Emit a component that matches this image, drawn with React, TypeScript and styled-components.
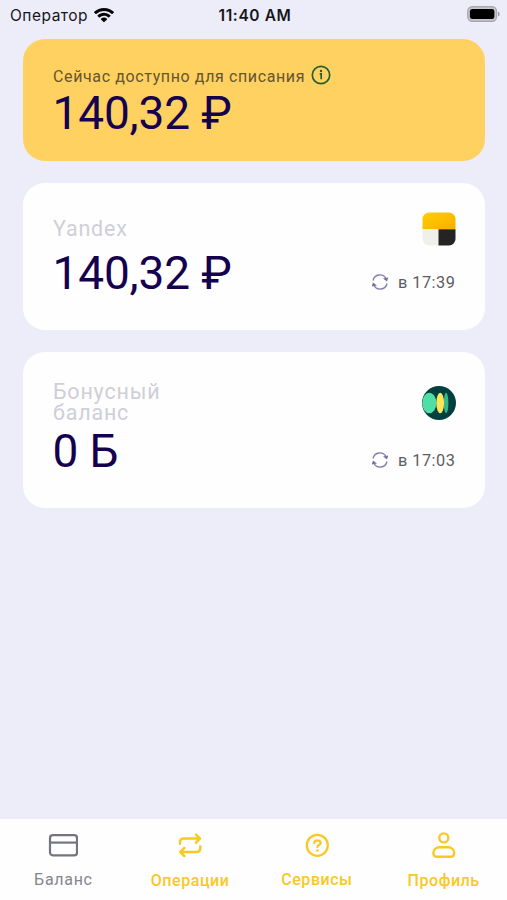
import React from "react";
import styled, { createGlobalStyle } from "styled-components";

const GlobalStyle = createGlobalStyle`
  *, *::before, *::after { box-sizing: border-box; }
  body { margin: 0; background: #ededf9; font-family: Roboto, sans-serif; }
  svg { display: block; flex: none; }
`;

const Screen = styled.div`
  display: flex;
  flex-direction: column;
  width: 507px;
  height: 900px;
  background: #ededf9;
  overflow: hidden;
`;

const StatusBar = styled.header`
  display: grid;
  grid-template-columns: 1fr auto 1fr;
  align-items: center;
  height: 30px;
  padding: 0 7px 0 10px;
  font-family: Inter, sans-serif;
  color: #15151c;
`;

const Carrier = styled.div`
  display: flex;
  align-items: center;
  gap: 6px;
  font-size: 15.5px;
  line-height: 20px;
  letter-spacing: 0.5px;

  span {
    padding-top: 1px;
  }
`;

const Clock = styled.div`
  padding-top: 1px;
  font-size: 15.5px;
  font-weight: 600;
  line-height: 20px;
  letter-spacing: 0.6px;
`;

const BatterySlot = styled.div`
  display: flex;
  justify-content: flex-end;
  margin-top: -2px;
`;

const Main = styled.main`
  flex: 1;
  display: flex;
  flex-direction: column;
  gap: 22px;
  padding: 9px 22px 0 23px;
`;

const Card = styled.section<{ $height: number; $top: number; $tone?: string }>`
  display: flex;
  justify-content: space-between;
  height: ${(p) => p.$height}px;
  padding: ${(p) => p.$top}px 30px 0;
  border-radius: 22px;
  background: ${(p) => p.$tone ?? "#fefeff"};
`;

const CardBody = styled.div`
  display: flex;
  flex-direction: column;
`;

const Hint = styled.div`
  display: flex;
  align-items: center;
  gap: 5.5px;
  height: 20px;
  font-size: 16px;
  letter-spacing: 0.62px;
  white-space: nowrap;
  color: #66552f;

  span {
    padding-top: 2px;
  }
`;

const Label = styled.div`
  width: 130px;
  font-size: 21.5px;
  line-height: 21.5px;
  letter-spacing: 0.8px;
  color: #cfcfd7;
`;

const Amount = styled.div<{ $gap: number }>`
  margin-top: ${(p) => p.$gap}px;
  margin-left: -0.5px;
  font-size: 46px;
  line-height: 54px;
  letter-spacing: -0.15px;
  white-space: nowrap;
  color: #150050;
`;

const CardSide = styled.div`
  display: flex;
  flex-direction: column;
  align-items: flex-end;
`;

const Updated = styled.div<{ $gap: number }>`
  display: flex;
  align-items: center;
  gap: 9px;
  margin-top: ${(p) => p.$gap}px;
  margin-right: -0.3px;
  font-size: 16.3px;
  line-height: 20px;
  letter-spacing: 0.5px;
  white-space: nowrap;
  color: #5c5c60;

  svg {
    margin-top: -1px;
  }

  span {
    padding-top: 1px;
  }
`;

const TabBar = styled.nav`
  display: grid;
  grid-template-columns: repeat(4, 1fr);
  height: 81px;
  padding: 11px 0 0;
  background: #fefeff;
`;

const Tab = styled.a<{ $muted?: boolean; $drop: number }>`
  display: flex;
  flex-direction: column;
  align-items: center;
  gap: ${(p) => 10 + p.$drop}px;
  font-size: 16px;
  font-weight: ${(p) => (p.$muted ? 400 : 500)};
  line-height: 20px;
  letter-spacing: ${(p) => (p.$muted ? 0.7 : 0.55)}px;
  color: ${(p) => (p.$muted ? "#85858b" : "#fac823")};
`;

const WifiIcon = () => (
  <svg width="20" height="15" viewBox="0 0 20 15" fill="#050507">
    <path d="M10 0C6.2 0 2.8 1.4.2 3.8c-.2.2-.2.5 0 .7l1.400 1.400c.2.2.5.2.7 0A11.200 11.200 0 0 1 10 3c3 0 5.700 1.100 7.700 2.900.2.2.5.2.7 0l1.400-1.400c.2-.2.2-.5 0-.7A14.300 14.300 0 0 0 10 0Z" />
    <path d="M10 4.800c-2.500 0-4.700.9-6.400 2.500-.2.2-.2.5 0 .7L5 9.400c.2.2.5.2.7 0A6.300 6.300 0 0 1 10 7.800c1.700 0 3.200.6 4.300 1.600.2.2.5.2.7 0L16.400 8c.2-.2.2-.5 0-.7A9.300 9.300 0 0 0 10 4.800Z" />
    <path d="M10 9.600c-1.200 0-2.200.4-3 1.100-.2.2-.2.5 0 .7l2.600 2.700c.2.2.5.2.7 0l2.700-2.700c.2-.2.2-.5 0-.7-.8-.7-1.800-1.100-3-1.100Z" />
  </svg>
);

const BatteryIcon = () => (
  <svg width="33" height="16" viewBox="0 0 33 16">
    <rect x=".75" y=".75" width="28.800" height="14.500" rx="4.500" fill="#c9c8d1" stroke="#a9a8b0" strokeWidth="1.300" />
    <rect x="2.900" y="2.900" width="24.500" height="10.200" rx="2.400" fill="#000" />
    <path d="M31 5.600c1 .4 1.600 1.300 1.600 2.400S32 10 31 10.400Z" fill="#9b9aa2" />
  </svg>
);

const InfoIcon = () => (
  <svg width="20" height="20" viewBox="0 0 20 20" fill="none" stroke="#255f34">
    <circle cx="10" cy="10" r="8.700" strokeWidth="1.700" />
    <path d="M8.700 8.900H10.200V14.200" strokeWidth="1.700" />
    <circle cx="10" cy="6" r="1.200" fill="#255f34" stroke="none" />
  </svg>
);

const RefreshIcon = () => (
  <svg width="18" height="18" viewBox="0 0 18 18" fill="none" stroke="#8280ad" strokeWidth="1.400">
    <path d="M2 7.500A7 7 0 0 1 15.300 6.200M16 10.500A7 7 0 0 1 2.700 11.800" />
    <path d="M12 5.600 17.300 4.400 16 8.400ZM6 12.400.7 13.600 2 9.600Z" fill="#7472a3" stroke="none" />
  </svg>
);

const YandexLogo = () => (
  <svg width="34" height="34" viewBox="0 0 34 34">
    <defs>
      <clipPath id="tile"><rect x=".5" y=".5" width="33" height="33" rx="6.500" /></clipPath>
      <linearGradient id="sun" x1="0" y1="0" x2="1" y2="1">
        <stop stopColor="#ffd000" />
        <stop offset="1" stopColor="#f8ae00" />
      </linearGradient>
    </defs>
    <g clipPath="url(#tile)">
      <path d="M0 0h34v17.300H0Z" fill="url(#sun)" />
      <path d="M0 17.300h17V34H0Z" fill="#f0efe9" />
      <path d="M16.500 17.300h17.500V34H16.500Z" fill="#242424" />
    </g>
  </svg>
);

const BonusLogo = () => (
  <svg width="34" height="34" viewBox="0 0 34 34">
    <circle cx="17" cy="17" r="17" fill="#023f3f" />
    <ellipse cx="7.300" cy="17" rx="7.100" ry="10.300" fill="#50dea7" />
    <ellipse cx="24.100" cy="17" rx="2.300" ry="10.200" fill="#35b98b" />
    <ellipse cx="18.200" cy="17" rx="3.900" ry="10.300" fill="#fbe558" />
  </svg>
);

const CardIcon = () => (
  <svg width="30" height="30" viewBox="0 0 30 30" fill="none" stroke="#737480" strokeWidth="2.200">
    <rect x="2" y="5.200" width="27" height="20.200" rx="2.800" />
    <path d="M2 12.600h27" />
  </svg>
);

const RepeatIcon = () => (
  <svg width="30" height="30" viewBox="0 0 30 30" fill="none" stroke="#fac823" strokeWidth="2.500" strokeLinecap="round" strokeLinejoin="round">
    <path d="M5 13.800v-1.500c0-2.400 1.500-3.700 3.900-3.700H25M21 4.600 25 8.600l-4 4" />
    <path d="M25.300 16.600v1.700c0 2.400-1.500 3.700-3.900 3.700H5.300M9.300 18 5.300 22l4 4" />
  </svg>
);

const HelpIcon = () => (
  <svg width="30" height="30" viewBox="0 0 30 30" fill="none" stroke="#fac823" strokeWidth="2.300" strokeLinecap="round">
    <circle cx="15.300" cy="15.300" r="10.500" />
    <path d="M12.300 13.100c0-3.700 6.300-3.600 6.300-.2 0 2.200-3.200 2.100-3.200 4.200" />
    <circle cx="15.400" cy="20.500" r="1.350" fill="#fac823" stroke="none" />
  </svg>
);

const ProfileIcon = () => (
  <svg width="30" height="30" viewBox="0 0 30 30" fill="none" stroke="#fac823" strokeWidth="2.400">
    <circle cx="14.800" cy="7.900" r="4.500" />
    <path d="M10.400 17.300h8.800c3.700 0 6 2.700 6 5.500 0 2.500-1.300 4-3.700 4H8.100c-2.400 0-3.700-1.500-3.700-4 0-2.800 2.300-5.500 6-5.500Z" />
  </svg>
);

const accounts = [
  { label: "Yandex", amount: "140,32 ₽", time: "17:39", height: 147, top: 35, amountGap: 6, Logo: YandexLogo, logoTop: -6, timeGap: 26 },
  { label: "Бонусный баланс", amount: "0 Б", time: "17:03", height: 156, top: 28.5, amountGap: 0.5, Logo: BonusLogo, logoTop: 5, timeGap: 30.5 },
];

const LogoSlot = styled.div<{ $shift: number }>`
  margin-top: ${(p) => p.$shift}px;
  margin-right: -0.5px;
`;

const tabs = [
  { label: "Баланс", Icon: CardIcon, muted: true, drop: 0 },
  { label: "Операции", Icon: RepeatIcon, drop: 1 },
  { label: "Сервисы", Icon: HelpIcon, drop: 0 },
  { label: "Профиль", Icon: ProfileIcon, drop: 1 },
];

export default function App() {
  return (
    <Screen>
      <GlobalStyle />
      <StatusBar>
        <Carrier>
          <span>Оператор</span>
          <WifiIcon />
        </Carrier>
        <Clock>11:40 AM</Clock>
        <BatterySlot><BatteryIcon /></BatterySlot>
      </StatusBar>
      <Main>
        <Card $height={122} $top={26} $tone="#fed161">
          <CardBody>
            <Hint>
              <span>Сейчас доступно для списания</span>
              <InfoIcon />
            </Hint>
            <Amount $gap={1}>140,32 ₽</Amount>
          </CardBody>
        </Card>
        {accounts.map(({ label, amount, time, height, top, amountGap, Logo, logoTop, timeGap }) => (
          <Card key={label} $height={height} $top={top}>
            <CardBody>
              <Label>{label}</Label>
              <Amount $gap={amountGap}>{amount}</Amount>
            </CardBody>
            <CardSide>
              <LogoSlot $shift={logoTop}><Logo /></LogoSlot>
              <Updated $gap={timeGap}>
                <RefreshIcon />
                <span>в {time}</span>
              </Updated>
            </CardSide>
          </Card>
        ))}
      </Main>
      <TabBar>
        {tabs.map(({ label, Icon, muted, drop }) => (
          <Tab key={label} $muted={muted} $drop={drop}>
            <Icon />
            <span>{label}</span>
          </Tab>
        ))}
      </TabBar>
    </Screen>
  );
}
